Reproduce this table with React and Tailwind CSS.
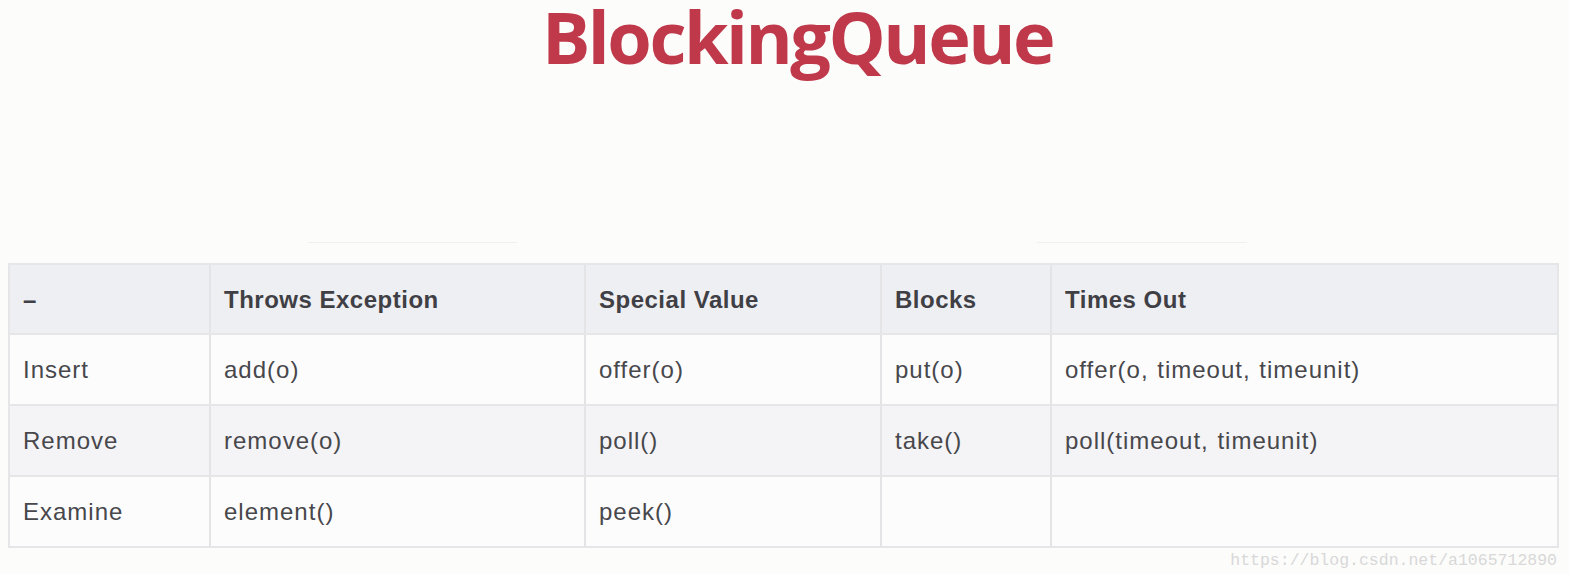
const headers = ["–", "Throws Exception", "Special Value", "Blocks", "Times Out"];

const rows = [
  ["Insert", "add(o)", "offer(o)", "put(o)", "offer(o, timeout, timeunit)"],
  ["Remove", "remove(o)", "poll()", "take()", "poll(timeout, timeunit)"],
  ["Examine", "element()", "peek()", "", ""],
];

// column widths measured off the table rules
const cols = "grid-cols-[199px_375px_296px_170px_1fr]";

export default function App() {
  return (
    <div className="w-[1569px] h-[574px] bg-[#fcfcfb] flex flex-col font-['Liberation_Sans',Arial,sans-serif] text-[#47474c]">
      <div className="h-[90px] flex justify-center pl-[26px]">
        <h1 className="text-[72px] leading-none font-bold text-[#c0394b] tracking-[-2.5px] font-['Open_Sans','Noto_Sans',sans-serif]">
          BlockingQueue
        </h1>
      </div>

      <div className="h-[174px] flex items-end pb-[20px]">
        <div className="ml-[308px] w-[209px] h-px bg-[#f3efec]" />
        <div className="ml-[520px] w-[210px] h-px bg-[#f3efec]" />
      </div>

      <div className="mx-[8px] w-[1551px] border-2 border-[#e6e5e8]">
        <div className={`grid ${cols} h-[68px] bg-[#eeeff3] text-[24px] tracking-[0.5px] font-bold text-[#3f3f45]`}>
          {headers.map((h, i) => (
            <div
              key={i}
              className={`flex items-center pt-[2px] px-[13px] ${i > 0 ? "border-l-2 border-[#e4e3e6]" : ""}`}
            >
              {h}
            </div>
          ))}
        </div>
        {rows.map((r, ri) => (
          <div
            key={ri}
            className={`grid ${cols} h-[71px] border-t-2 border-[#e6e5e8] text-[24px] tracking-[1px] [word-spacing:1px] ${ri === 1 ? "bg-[#f4f3f5]" : "bg-[#fcfcfc]"}`}
          >
            {r.map((c, ci) => (
              <div
                key={ci}
                className={`flex items-center px-[13px] ${ci > 0 ? "border-l-2 border-[#e4e3e6]" : ""}`}
              >
                {c}
              </div>
            ))}
          </div>
        ))}
      </div>

      <div className="flex justify-end pr-[12px] pt-[1px]">
        <span className="font-['Liberation_Mono',monospace] text-[16.5px] text-[#d8d8d8]">
          https://blog.csdn.net/a1065712890
        </span>
      </div>
    </div>
  );
}
